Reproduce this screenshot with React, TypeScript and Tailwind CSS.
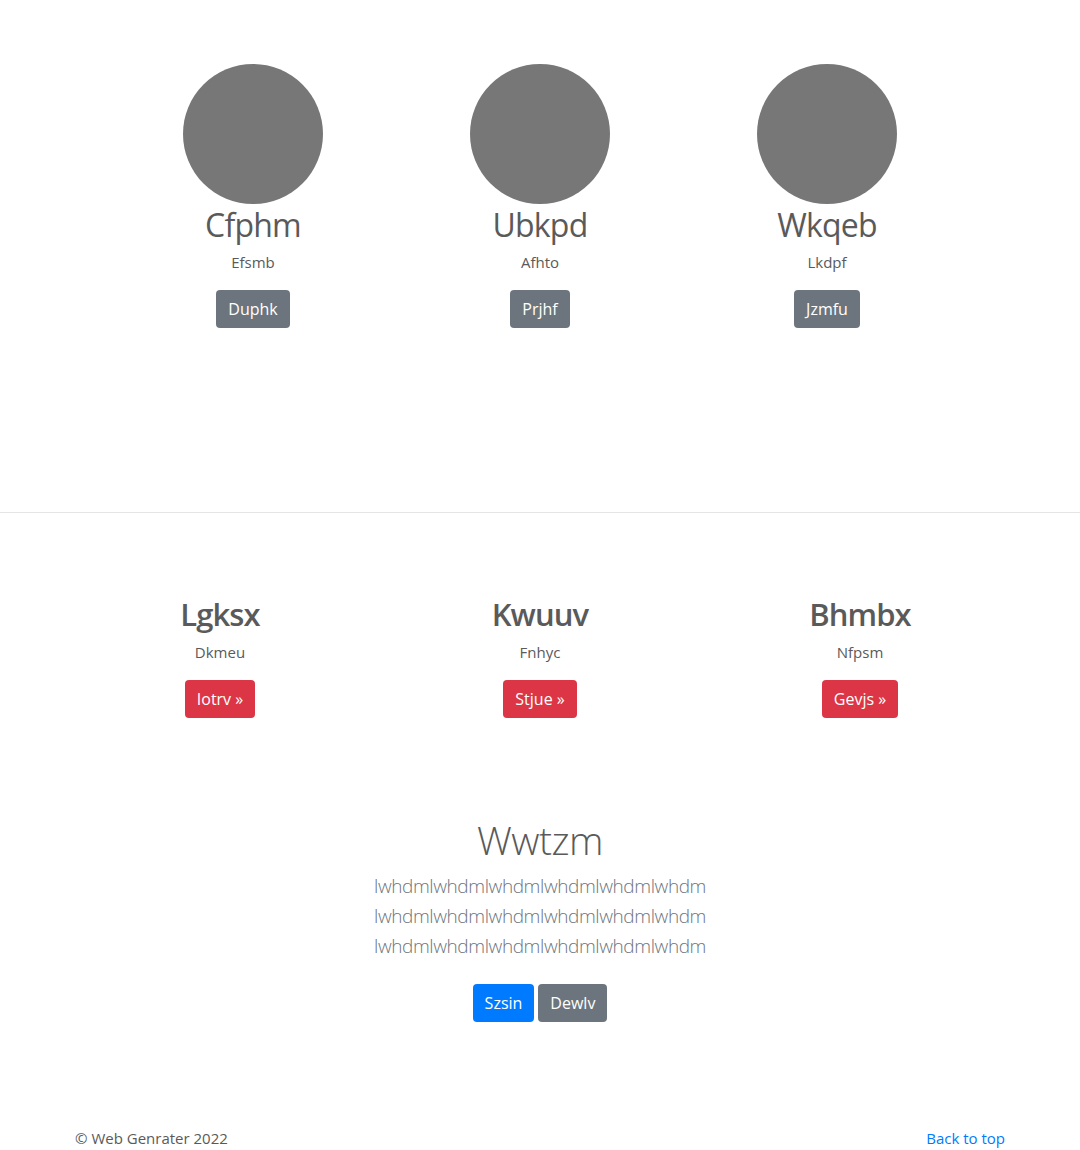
import React from "react";

const font = { fontFamily: '"Open Sans", "Noto Sans", sans-serif' };

function Btn({ children, color }: { children: React.ReactNode; color: string }) {
  return (
    <span className={`inline-flex h-[38px] items-center rounded-[4px] px-[12px] text-[16px] text-white ${color}`}>
      {children}
    </span>
  );
}

export default function App() {
  const top = [
    ["Cfphm", "Efsmb", "Duphk"],
    ["Ubkpd", "Afhto", "Prjhf"],
    ["Wkqeb", "Lkdpf", "Jzmfu"],
  ];
  const mid = [
    ["Lgksx", "Dkmeu", "Iotrv »"],
    ["Kwuuv", "Fnhyc", "Stjue »"],
    ["Bhmbx", "Nfpsm", "Gevjs »"],
  ];
  return (
    <div className="min-h-[1150px] bg-white text-[#5a5a5a]" style={font}>
      <div className="mx-auto grid w-[861px] grid-cols-3 pt-[64px]">
        {top.map(([h, s, b]) => (
          <div key={h} className="flex flex-col items-center text-center">
            <div className="h-[140px] w-[140px] rounded-full bg-[#777777]" />
            <h2 className="mt-[2px] text-[32px] leading-[38px] font-normal tracking-[-0.8px]">{h}</h2>
            <p className="mt-[6px] text-[15px] leading-[24px]">{s}</p>
            <div className="mt-[16px]">
              <Btn color="bg-[#6c757d]">{b}</Btn>
            </div>
          </div>
        ))}
      </div>
      <hr className="mt-[184px] border-t border-[#e5e5e5]" />
      <div className="mx-auto grid w-[960px] grid-cols-3 pt-[82px]">
        {mid.map(([h, s, b]) => (
          <div key={h} className="flex flex-col items-center text-center">
            <h2 className="text-[31px] leading-[38px] font-semibold tracking-[-0.9px]">{h}</h2>
            <p className="mt-[7px] text-[15px] leading-[24px]">{s}</p>
            <div className="mt-[16px]">
              <Btn color="bg-[#dc3545]">{b}</Btn>
            </div>
          </div>
        ))}
      </div>
      <div className="flex flex-col items-center pt-[98px] text-center">
        <h1 className="text-[39px] leading-[48px] font-light tracking-[-0.5px]">Wwtzm</h1>
        <div className="mt-[7px] text-[19px] leading-[30px] font-light text-[#6c757d] tracking-[-0.4px]">
          <div>lwhdmlwhdmlwhdmlwhdmlwhdmlwhdm</div>
          <div>lwhdmlwhdmlwhdmlwhdmlwhdmlwhdm</div>
          <div>lwhdmlwhdmlwhdmlwhdmlwhdmlwhdm</div>
        </div>
        <div className="mt-[23px] flex gap-[4px]">
          <Btn color="bg-[#007bff]">Szsin</Btn>
          <Btn color="bg-[#6c757d]">Dewlv</Btn>
        </div>
      </div>
      <footer className="mx-auto mt-[104px] flex w-[930px] justify-between text-[15px] leading-[24px]">
        <p>© Web Genrater 2022</p>
        <a className="text-[#007bff]">Back to top</a>
      </footer>
    </div>
  );
}
